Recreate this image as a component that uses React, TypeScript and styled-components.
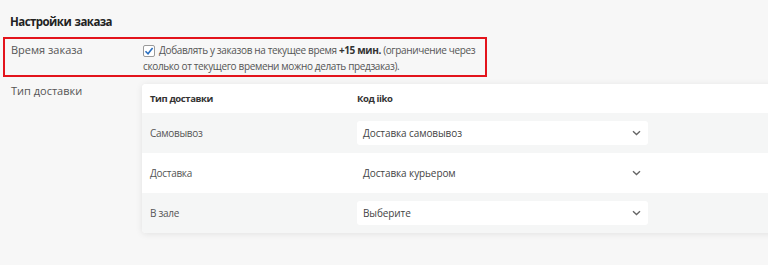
import React from "react";
import styled, { createGlobalStyle } from "styled-components";

const Global = createGlobalStyle`
  html, body { margin: 0; padding: 0; background: #f7f7f7; overflow: hidden; }
  body { font-family: "Open Sans", "Noto Sans", sans-serif; color: #444; }
  * { box-sizing: border-box; }
`;

const Page = styled.div`
  width: 768px;
  height: 265px;
  padding-top: 13px;
  overflow: hidden;
`;

const Title = styled.h2`
  margin: 0 0 6px 0;
  padding-left: 10px;
  font-size: 11.5px;
  line-height: 18px;
  font-weight: 700;
  letter-spacing: -0.55px;
  word-spacing: 1px;
  color: #222;
`;

const HighlightRow = styled.div`
  margin-left: 3px;
  width: 484px;
  height: 40px;
  border: 2px solid #e3141c;
  padding: 3px 4px 0 6px;
  display: grid;
  grid-template-columns: 132px 1fr;
`;

const FormRow = styled.div`
  display: grid;
  grid-template-columns: 131px 1fr;
  padding-left: 11px;
`;

const Label = styled.div<{ $top?: number }>`
  font-size: 11px;
  line-height: 16px;
  color: #555;
  padding-top: ${(p) => p.$top ?? 0}px;
`;

const CheckText = styled.div`
  font-size: 10px;
  letter-spacing: -0.36px;
  line-height: 16px;
  color: #555;
  b { color: #333; font-weight: 700; }
`;

const Box = styled.span`
  display: inline-flex;
  align-items: center;
  justify-content: center;
  width: 12px;
  height: 12px;
  border: 1px solid #9a9a9a;
  border-radius: 2px;
  background: #fff;
  vertical-align: -2px;
  margin-right: 4px;
`;

const Card = styled.div`
  margin-top: 7px;
  width: 720px;
  background: #fff;
  border-radius: 4px;
  box-shadow: 0 1px 7px rgba(0, 0, 0, 0.09);
  overflow: hidden;
`;

const TableRow = styled.div<{ $alt?: boolean; $head?: boolean }>`
  display: grid;
  grid-template-columns: 215px 291px 1fr;
  align-items: center;
  height: ${(p) => (p.$head ? 29 : 40)}px;
  background: ${(p) => (p.$alt ? "#f5f6f6" : "#fff")};
`;

const HeadCell = styled.div<{ $pad?: number }>`
  font-size: 9.5px;
  letter-spacing: -0.4px;
  font-weight: 700;
  color: #333;
  padding-left: ${(p) => p.$pad ?? 0}px;
`;

const Cell = styled.div`
  font-size: 10px;
  letter-spacing: -0.3px;
  color: #555;
  padding-left: 8px;
`;

const Select = styled.div`
  height: 24px;
  background: #fff;
  border-radius: 3px;
  display: flex;
  align-items: center;
  justify-content: space-between;
  padding: 0 7px 0 6px;
  font-size: 10px;
  letter-spacing: -0.1px;
  color: #444;
`;

const Chevron = () => (
  <svg width="9" height="6" viewBox="0 0 9 6">
    <polyline points="1,1.2 4.5,4.5 8,1.2" fill="none" stroke="#666" strokeWidth="1.4" />
  </svg>
);

const Check = () => (
  <svg width="10" height="10" viewBox="0 0 10 10">
    <polyline points="1.5,5.2 4,7.7 8.6,2" fill="none" stroke="#2a6fc0" strokeWidth="1.6" />
  </svg>
);

const rows = [
  { name: "Самовывоз", value: "Доставка самовывоз" },
  { name: "Доставка", value: "Доставка курьером" },
  { name: "В зале", value: "Выберите" },
];

export default function App() {
  return (
    <Page>
      <Global />
      <Title>Настройки заказа</Title>
      <HighlightRow>
        <Label>Время заказа</Label>
        <CheckText>
          <Box>
            <Check />
          </Box>
          Добавлять у заказов на текущее время <b>+15 мин.</b> (ограничение через сколько от
          текущего времени можно делать предзаказ).
        </CheckText>
      </HighlightRow>
      <FormRow>
        <Label $top={6}>Тип доставки</Label>
        <Card>
          <TableRow $head>
            <HeadCell $pad={8}>Тип доставки</HeadCell>
            <HeadCell>Код iiko</HeadCell>
          </TableRow>
          {rows.map((r, i) => (
            <TableRow key={r.name} $alt={i % 2 === 0}>
              <Cell>{r.name}</Cell>
              <Select>
                {r.value}
                <Chevron />
              </Select>
            </TableRow>
          ))}
        </Card>
      </FormRow>
    </Page>
  );
}
